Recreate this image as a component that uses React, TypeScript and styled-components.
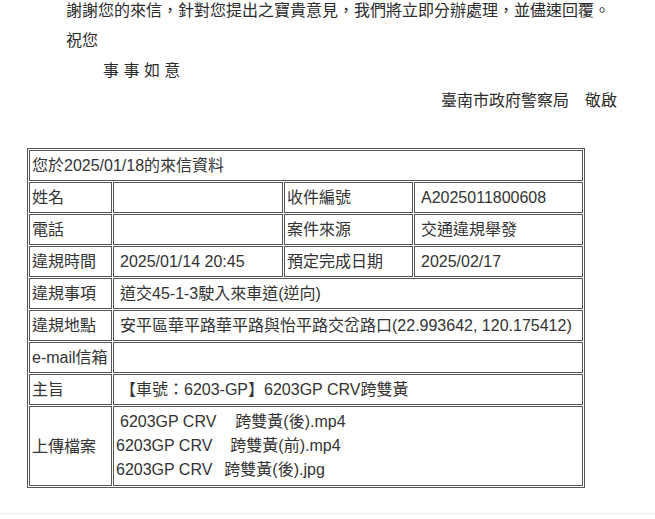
import React from "react";
import styled, { createGlobalStyle } from "styled-components";

const GlobalStyle = createGlobalStyle`
  html, body {
    margin: 0;
    padding: 0;
    background: #ffffff;
  }
  body {
    font-family: "Liberation Sans", Arial, "Noto Sans CJK TC", sans-serif;
    font-size: 16px;
    color: #2b2b2b;
  }
`;

const Page = styled.div`
  width: 655px;
  height: 519px;
  overflow: hidden;
  display: flex;
  flex-direction: column;
`;

const Letter = styled.div`
  margin: -4px 38px 0 66px;
  font-size: 16px;
  line-height: 30px;
  color: #2b2b2b;
`;

const Line = styled.p<{ $align?: "left" | "right"; $indent?: number }>`
  margin: 0;
  white-space: pre;
  text-align: ${(p) => p.$align ?? "left"};
  padding-left: ${(p) => p.$indent ?? 0}px;
`;

const InfoTable = styled.table`
  margin: 32px 0 0 27px;
  width: 558px;
  table-layout: fixed;
  border-collapse: separate;
  border-spacing: 1px;
  border: 1px solid #555555;
  font-size: 16px;
  color: #333333;
`;

const Cell = styled.td<{ $lead?: boolean }>`
  border: 1px solid #555555;
  padding: 2px;
  line-height: 25px;
  vertical-align: middle;
  white-space: nowrap;
  overflow: hidden;
  padding-left: ${(p) => (p.$lead ? "6px" : "2px")};
`;

const FilesCell = styled(Cell)`
  line-height: 24px;
  padding-top: 3px;
  padding-bottom: 3px;
  padding-left: 2px;
`;

const FileLine = styled.div<{ $lead?: number }>`
  display: flex;
  align-items: baseline;
  padding-left: ${(p) => p.$lead ?? 0}px;
`;

const Redact = styled.span<{ $w: number }>`
  display: inline-block;
  width: ${(p) => p.$w}px;
`;

const Rule = styled.div`
  margin-top: 25px;
  height: 1px;
  background: #ececec;
  width: 100%;
`;

const files = [
  { lead: 4, gap: 19, name: "跨雙黃(後).mp4" },
  { lead: 0, gap: 18, name: "跨雙黃(前).mp4" },
  { lead: 0, gap: 12, name: "跨雙黃(後).jpg" },
];

export default function App() {
  return (
    <Page>
      <GlobalStyle />
      <Letter>
        <Line>謝謝您的來信，針對您提出之寶貴意見，我們將立即分辦處理，並儘速回覆。</Line>
        <Line>祝您</Line>
        <Line $indent={37}>事 事 如 意</Line>
        <Line $align="right">臺南市政府警察局　敬啟</Line>
      </Letter>
      <InfoTable>
        <colgroup>
          <col style={{ width: 83 }} />
          <col style={{ width: 170 }} />
          <col style={{ width: 129 }} />
          <col style={{ width: 169 }} />
        </colgroup>
        <tbody>
          <tr>
            <Cell colSpan={4}>您於2025/01/18的來信資料</Cell>
          </tr>
          <tr>
            <Cell>姓名</Cell>
            <Cell $lead></Cell>
            <Cell>收件編號</Cell>
            <Cell $lead>A2025011800608</Cell>
          </tr>
          <tr>
            <Cell>電話</Cell>
            <Cell $lead></Cell>
            <Cell>案件來源</Cell>
            <Cell $lead>交通違規舉發</Cell>
          </tr>
          <tr>
            <Cell>違規時間</Cell>
            <Cell $lead>2025/01/14 20:45</Cell>
            <Cell>預定完成日期</Cell>
            <Cell $lead>2025/02/17</Cell>
          </tr>
          <tr>
            <Cell>違規事項</Cell>
            <Cell $lead colSpan={3}>道交45-1-3駛入來車道(逆向)</Cell>
          </tr>
          <tr>
            <Cell>違規地點</Cell>
            <Cell $lead colSpan={3}>安平區華平路華平路與怡平路交岔路口(22.993642, 120.175412)</Cell>
          </tr>
          <tr>
            <Cell>e-mail信箱</Cell>
            <Cell $lead colSpan={3}></Cell>
          </tr>
          <tr>
            <Cell>主旨</Cell>
            <Cell $lead colSpan={3}>【車號：6203-GP】6203GP CRV跨雙黃</Cell>
          </tr>
          <tr>
            <Cell>上傳檔案</Cell>
            <FilesCell colSpan={3}>
              {files.map((f, i) => (
                <FileLine key={i} $lead={f.lead}>
                  <span>6203GP CRV</span>
                  <Redact $w={f.gap} />
                  <span>{f.name}</span>
                </FileLine>
              ))}
            </FilesCell>
          </tr>
        </tbody>
      </InfoTable>
      <Rule />
    </Page>
  );
}
